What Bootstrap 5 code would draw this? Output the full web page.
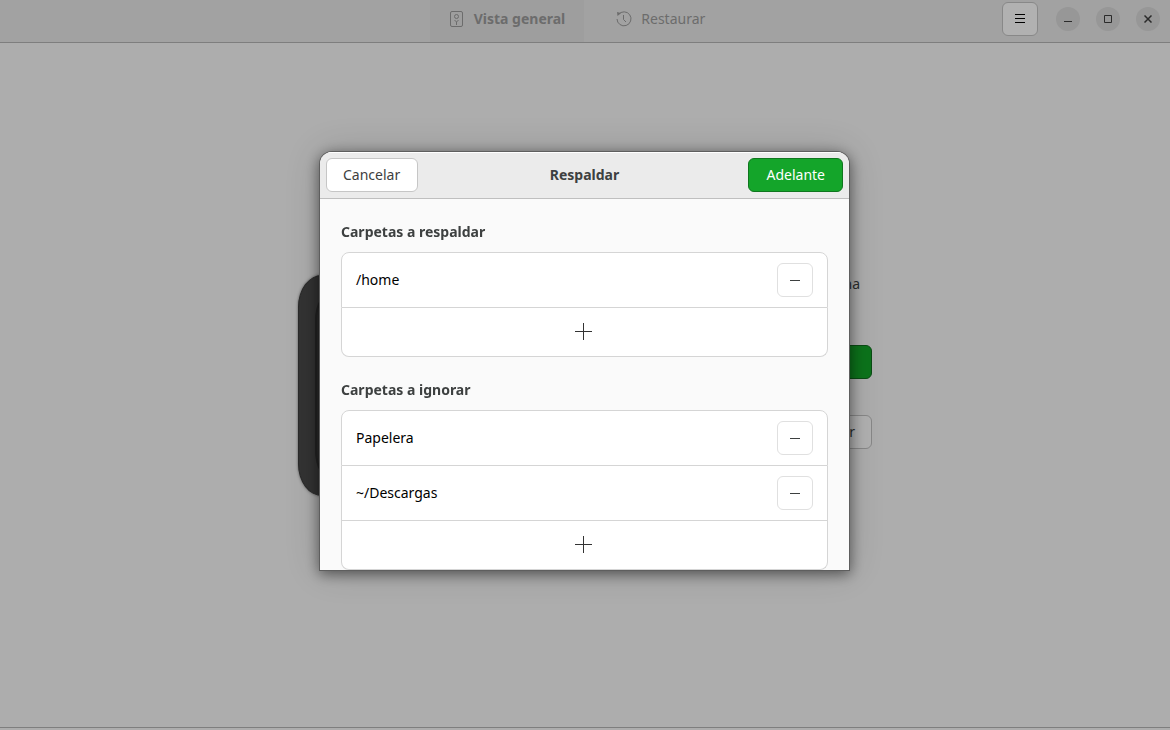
<!DOCTYPE html>
<html lang="es">
<head>
<meta charset="utf-8">
<meta name="viewport" content="width=device-width, initial-scale=1">
<title>Respaldar</title>
<link href="https://cdn.jsdelivr.net/npm/bootstrap@5.3.0/dist/css/bootstrap.min.css" rel="stylesheet">
<style>
  body { font: 14px/20px "Noto Sans", sans-serif; background: #adadad; color: #2b2e2e; }
  svg { display: block; fill: none; stroke: currentColor; }
  .btn { --bs-btn-font-size: 14px; --bs-btn-line-height: 20px; --bs-btn-padding-y: 6px; --bs-btn-padding-x: 16px; --bs-btn-border-radius: 6px; }

  /* Window behind the dialog */
  .window-frame { border-bottom: 1px solid #7e7e7e; margin-bottom: 2px; height: calc(100vh - 2px); }
  .titlebar { display: grid; grid-template-columns: 1fr auto 1fr; height: 43px; background: #a2a2a2; border-bottom: 1px solid #7e7e7e; }
  .view-tab { border: 0; background: none; color: #6c6c6c; gap: 8px; padding: 0 19px 4px 18px; font-size: 14px; }
  .view-tab + .view-tab { padding: 0 35px 4px 31px; }
  .view-tab.active { background: #9e9e9e; font-weight: 700; }
  .window-tools { padding: 2px 10px 6px 0; gap: 16px; }
  .menu-btn { width: 36px; height: 34px; padding: 0; margin-right: 2px; background: #b1b1b1; border: 1px solid #888; border-radius: 6px; }
  .round-btn { width: 24px; height: 24px; padding: 0; border: 0; border-radius: 50%; background: #979797; color: #2b2b2b; }
  .welcome { width: 574px; }
  .welcome-actions { padding-bottom: 48px; }
  .safe-box { width: 220px; height: 221px; padding: 16px; border-radius: 24px / 32px; background: #333; border: 1px solid #2a2a2a; box-shadow: 0 0 3px #555; }
  .safe-door { border: 2px solid #222; border-radius: 16px / 28px; background: #2b2b2b; }
  .btn-dim-green { --bs-btn-bg: #0c741b; --bs-btn-border-color: #0a4c14; --bs-btn-color: #b5b5b5; margin: 51px 0 36px; }
  .btn-dim { --bs-btn-bg: #b1b1b1; --bs-btn-border-color: #888; --bs-btn-color: #2b2e2e; }

  /* Backup dialog */
  .modal { --bs-modal-width: 529px; --bs-modal-margin: 0px; padding: 0 1px 8px 0; }
  .modal-content { border: 0; border-radius: 12px 12px 0 0; overflow: hidden; background: #fafafa; color: #3d4040; box-shadow: 0 0 0 1px #5e5e5e, 0 3px 14px 1px rgba(0,0,0,.5), 0 0 36px rgba(0,0,0,.16); }
  .modal-header { display: grid; grid-template-columns: 1fr auto 1fr; height: 47px; padding: 6px; border-bottom: 1px solid #bfbfbf; border-radius: 0; background: #ebebeb; box-shadow: inset 0 1px #fff; }
  .modal-header .btn { --bs-btn-padding-x: 17px; }
  .modal-header .btn-light-box { padding-left: 16px; }
  .modal-title, .group-title { font-size: 14px; line-height: 20px; font-weight: 700; }
  .modal-body { padding: 23px 21px 0; }
  .group-title { margin-bottom: 10px; }
  .folder-group { margin-bottom: 23px; }
  .folder-group:last-child { margin-bottom: 0; }
  .list-group { --bs-list-group-border-color: #d5d5d5; --bs-list-group-border-radius: 8px; --bs-list-group-color: #000; --bs-list-group-item-padding-x: 14px; --bs-list-group-item-padding-y: 10px; }
  .btn-light-box { --bs-btn-bg: #fff; --bs-btn-border-color: #c6c6c6; --bs-btn-color: #3d4040; }
  .btn-remove { width: 36px; height: 34px; padding: 0; --bs-btn-border-color: #e0e0e0; }
  .btn-go { --bs-btn-bg: #14a52a; --bs-btn-border-color: #0f761e; --bs-btn-color: #fff; }
  .add-row { height: 49px; padding: 0 3px 2px 0; color: #333; }
</style>
</head>
<body>
<div class="window-frame d-flex flex-column">
  <header class="titlebar">
    <span></span>
    <nav class="d-flex" aria-label="Vistas">
      <button type="button" class="view-tab active d-flex align-items-center">
        <svg width="18" height="18" viewBox="0 0 18 18"><rect x="2.500" y="1.500" width="12" height="15" rx="1.500"/><circle cx="8.500" cy="6.500" r="2"/><path d="M6.500 10l2 2 2-2M8.500 12v3"/></svg>
        Vista general
      </button>
      <button type="button" class="view-tab d-flex align-items-center">
        <svg width="18" height="18" viewBox="0 0 18 18"><path d="M3.500 4.500A7 7 0 1 1 2 9M8.500 5v4.500l2.500 2.500"/><path d="M2 2l4 1-3.500 3z" fill="currentColor" stroke="none"/></svg>
        Restaurar
      </button>
    </nav>
    <div class="window-tools d-flex align-items-center justify-content-end">
      <button type="button" class="menu-btn d-flex align-items-center justify-content-center" aria-label="Menú"><svg width="10" height="10" viewBox="0 0 10 10"><path d="M0 .5h10M0 4.500h10M0 8.500h10"/></svg></button>
      <button type="button" class="round-btn d-flex align-items-center justify-content-center" aria-label="Minimizar"><svg width="8" height="8" viewBox="0 0 8 8"><path d="M0 6.500h8"/></svg></button>
      <button type="button" class="round-btn d-flex align-items-center justify-content-center" aria-label="Maximizar"><svg width="8" height="8" viewBox="0 0 8 8"><path d="M.5.5h7v7h-7z"/></svg></button>
      <button type="button" class="round-btn d-flex align-items-center justify-content-center" aria-label="Cerrar"><svg width="8" height="8" viewBox="0 0 8 8" stroke-width="1.500"><path d="M.5.5l7 7M7.500.5l-7 7"/></svg></button>
    </div>
  </header>
  <main class="flex-grow-1 d-flex align-items-center justify-content-center">
    <div class="welcome d-flex align-items-center justify-content-between">
      <div class="safe-box d-flex"><div class="safe-door flex-grow-1"></div></div>
      <div class="welcome-actions d-flex flex-column">
        <p class="mb-0 text-end pe-2 me-1">Semana</p>
        <button type="button" class="btn btn-dim-green">Crear</button>
        <button type="button" class="btn btn-dim">Restaurar</button>
      </div>
    </div>
  </main>
</div>

<div class="modal d-block" role="dialog" aria-labelledby="dialog-title">
  <div class="modal-dialog modal-dialog-centered">
    <div class="modal-content">
      <div class="modal-header">
        <button type="button" class="btn btn-light-box me-auto">Cancelar</button>
        <h1 class="modal-title" id="dialog-title">Respaldar</h1>
        <button type="button" class="btn btn-go ms-auto">Adelante</button>
      </div>
      <div class="modal-body">
        <section class="folder-group">
          <h2 class="group-title">Carpetas a respaldar</h2>
          <div class="list-group">
            <div class="list-group-item d-flex align-items-center justify-content-between">/home
              <button type="button" class="btn btn-light-box btn-remove d-flex align-items-center justify-content-center" aria-label="Quitar /home"><svg width="10" height="2" viewBox="0 0 10 2"><path d="M0 1.500h10"/></svg></button>
            </div>
            <button type="button" class="list-group-item list-group-item-action add-row d-flex align-items-center justify-content-center" aria-label="Añadir carpeta a respaldar"><svg width="17" height="17" viewBox="0 0 17 17"><path d="M0 8.500h17M8.500 0v17"/></svg></button>
          </div>
        </section>
        <section class="folder-group">
          <h2 class="group-title">Carpetas a ignorar</h2>
          <div class="list-group">
            <div class="list-group-item d-flex align-items-center justify-content-between">Papelera
              <button type="button" class="btn btn-light-box btn-remove d-flex align-items-center justify-content-center" aria-label="Quitar Papelera"><svg width="10" height="2" viewBox="0 0 10 2"><path d="M0 1.500h10"/></svg></button>
            </div>
            <div class="list-group-item d-flex align-items-center justify-content-between">~/Descargas
              <button type="button" class="btn btn-light-box btn-remove d-flex align-items-center justify-content-center" aria-label="Quitar Descargas"><svg width="10" height="2" viewBox="0 0 10 2"><path d="M0 1.500h10"/></svg></button>
            </div>
            <button type="button" class="list-group-item list-group-item-action add-row d-flex align-items-center justify-content-center" aria-label="Añadir carpeta a ignorar"><svg width="17" height="17" viewBox="0 0 17 17"><path d="M0 8.500h17M8.500 0v17"/></svg></button>
          </div>
        </section>
      </div>
    </div>
  </div>
</div>
<script src="https://cdn.jsdelivr.net/npm/bootstrap@5.3.0/dist/js/bootstrap.bundle.min.js"></script>
</body>
</html>
